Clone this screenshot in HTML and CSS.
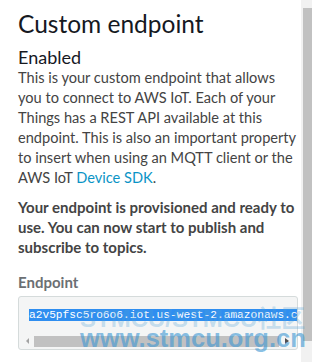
FILE: index.html
```html
<!DOCTYPE html>
<html>
<head>
<meta charset="utf-8">
<link rel="stylesheet" href="styles.css">
</head>
<body>
<div class="page">
  <main class="content">
    <h1 class="title">Custom endpoint</h1>
    <h2 class="status">Enabled</h2>
    <p class="desc">This is your custom endpoint that allows you to connect to AWS IoT. Each of your Things has a REST API available at this endpoint. This is also an important property to insert when using an MQTT client or the AWS IoT <a class="link" href="#">Device SDK</a>.</p>
    <p class="ready">Your endpoint is provisioned and ready to use. You can now start to publish and subscribe to topics.</p>
    <div class="field">
      <div class="label">Endpoint</div>
      <div class="box">
        <div class="value"><span class="sel">a2v5pfsc5ro6o6.iot.us-west-2.amazonaws.com</span></div>
        <div class="hscroll">
          <span class="arrow left"></span>
          <span class="hthumb"></span>
          <span class="arrow right"></span>
        </div>
      </div>
    </div>
  </main>
  <div class="vscroll"><div class="vthumb"></div></div>
  <div class="watermark">
    <div class="wm1">STMCU/STMCU社区</div>
    <div class="wm2">www.stmcu.org.cn</div>
  </div>
</div>
</body>
</html>
```
FILE: styles.css
```css
html, body { margin: 0; padding: 0; background: #fff; }
.page {
  position: relative;
  display: flex;
  width: 312px;
  height: 362px;
  overflow: hidden;
}
.content {
  width: 281px;
  padding: 0 0 0 18px;
  font-family: "Lato", sans-serif;
  color: #444;
}
.title {
  margin: 8px 0 0;
  font-size: 24.5px;
  font-weight: 400;
  line-height: 32px;
  color: #16191f;
}
.status {
  margin: 6px 0 0;
  font-size: 18px;
  font-weight: 400;
  line-height: 22px;
  color: #16191f;
}
.desc {
  margin: 0;
  font-size: 14.6px;
  line-height: 20px;
}
.link { color: #0a94c6; text-decoration: none; }
.ready {
  margin: 9px 0 0;
  font-size: 15px;
  line-height: 20px;
  font-weight: 700;
}
.field { margin-top: 15px; }
.label {
  font-size: 15px;
  font-weight: 700;
  color: #6b6f73;
  line-height: 20px;
}
.box {
  margin-top: 4px;
  width: 278px;
  height: 52px;
  border: 1px solid #d5dbdb;
  border-radius: 3px;
  background: #f4f5f5;
  overflow: hidden;
}
.value {
  margin-top: 9px;
  padding-left: 10px;
  white-space: nowrap;
  font-family: "Liberation Mono", monospace;
  font-size: 11.2px;
  line-height: 18px;
}
.sel { background: #2f8ef0; color: #fff; }
.hscroll {
  margin-top: 11px;
  height: 12px;
  display: flex;
  align-items: center;
  padding: 0 2px;
}
.arrow { width: 0; height: 0; border-top: 3px solid transparent; border-bottom: 3px solid transparent; }
.arrow.left { border-right: 3px solid #a3a3a3; margin-left: 5px; }
.arrow.right { border-left: 4px solid #505050; margin-right: 6px; }
.hthumb {
  flex: 1;
  height: 11px;
  margin: 0 6px 0 5px;
  background: #c1c1c1;
}
.vscroll {
  margin-left: 2px;
  width: 11px;
  background: #f1f1f1;
  padding-top: 8px;
}
.vthumb {
  height: 333px;
  margin-left: 2px;
  background: #c1c1c1;
}
.watermark {
  position: absolute;
  left: 80px;
  top: 310px;
  font-family: "Liberation Sans", "Noto Sans CJK SC", sans-serif;
  font-weight: 700;
  white-space: nowrap;
  pointer-events: none;
}
.wm1 {
  font-size: 24px;
  line-height: 18px;
  color: rgba(80, 160, 215, 0.3);
}
.wm2 {
  font-size: 25.5px;
  line-height: 20px;
  color: rgba(60, 150, 210, 0.6);
}
```
